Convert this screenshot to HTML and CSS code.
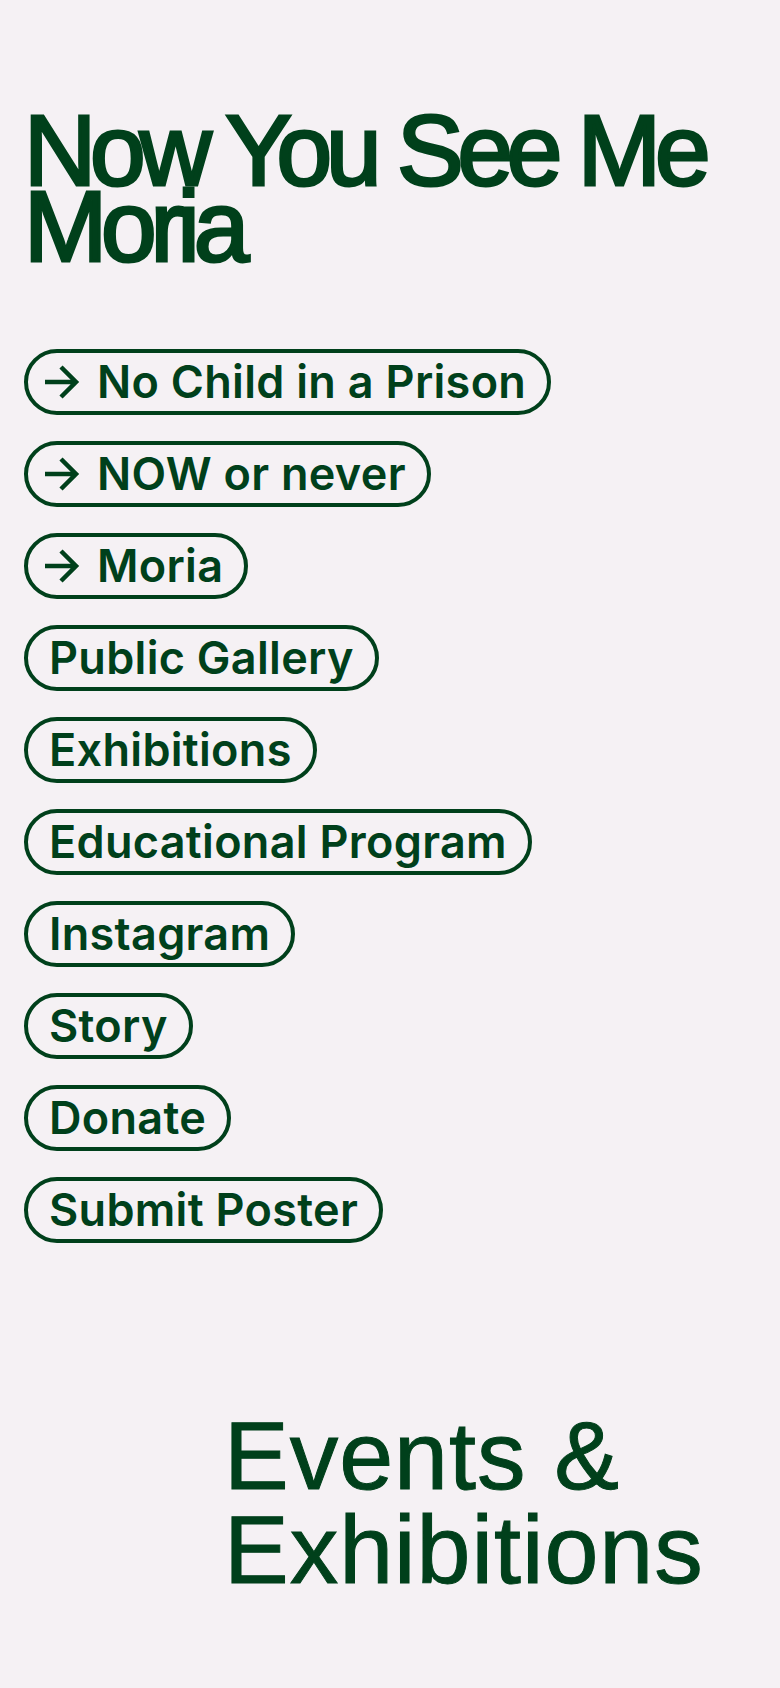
FILE: index.html
```html
<!DOCTYPE html>
<html lang="en">
<head>
    <meta charset="UTF-8">
    <meta name="viewport" content="width=device-width, initial-scale=1.0">
    <title>Now You See Me Moria</title>
    <link rel="stylesheet" href="styles.css">
</head>
<body>
    <div class="page">
        <h1 class="site-title">Now You See Me<br>Moria</h1>

        <nav class="pill-nav">
            <a href="#" class="pill"><svg class="pill-arrow" viewBox="0 0 36 36"><path d="M1 18H33M17 3L32 18L17 33"/></svg>No Child in a Prison</a>
            <a href="#" class="pill"><svg class="pill-arrow" viewBox="0 0 36 36"><path d="M1 18H33M17 3L32 18L17 33"/></svg>NOW or never</a>
            <a href="#" class="pill"><svg class="pill-arrow" viewBox="0 0 36 36"><path d="M1 18H33M17 3L32 18L17 33"/></svg>Moria</a>
            <a href="#" class="pill">Public Gallery</a>
            <a href="#" class="pill">Exhibitions</a>
            <a href="#" class="pill">Educational Program</a>
            <a href="#" class="pill">Instagram</a>
            <a href="#" class="pill">Story</a>
            <a href="#" class="pill">Donate</a>
            <a href="#" class="pill">Submit Poster</a>
        </nav>

        <h2 class="section-title">Events &amp;<br>Exhibitions</h2>
    </div>
</body>
</html>
```

FILE: styles.css
```css
body {
    margin: 0;
    background-color: #f5f1f4;
    color: #00401b;
    font-family: "Liberation Sans", Arial, sans-serif;
}
.page {
    padding: 112px 0 120px 24px;
}
.site-title {
    margin: 0;
    font-size: 100px;
    line-height: 76px;
    font-weight: normal;
    letter-spacing: -0.062em;
    -webkit-text-stroke: 3px #00401b;
}
.pill-nav {
    display: flex;
    flex-direction: column;
    align-items: flex-start;
    gap: 26px;
    margin-top: 85px;
}
.pill {
    display: flex;
    align-items: center;
    height: 58px;
    padding: 0 21px;
    border: 4px solid #00401b;
    border-radius: 40px;
    color: #00401b;
    text-decoration: none;
    font-family: Inter, "Liberation Sans", sans-serif;
    font-size: 45px;
    font-weight: 600;
    line-height: 58px;
    letter-spacing: 0.3px;
    white-space: nowrap;
}
.pill-arrow {
    width: 36px;
    height: 36px;
    margin: 0 17px 0 -5px;
    fill: none;
    stroke: #00401b;
    stroke-width: 4.5;
}
.section-title {
    margin: 166px 0 0 200px;
    font-size: 97px;
    line-height: 94px;
    font-weight: normal;
    letter-spacing: 0.01em;
    -webkit-text-stroke: 1px #00401b;
}
```
